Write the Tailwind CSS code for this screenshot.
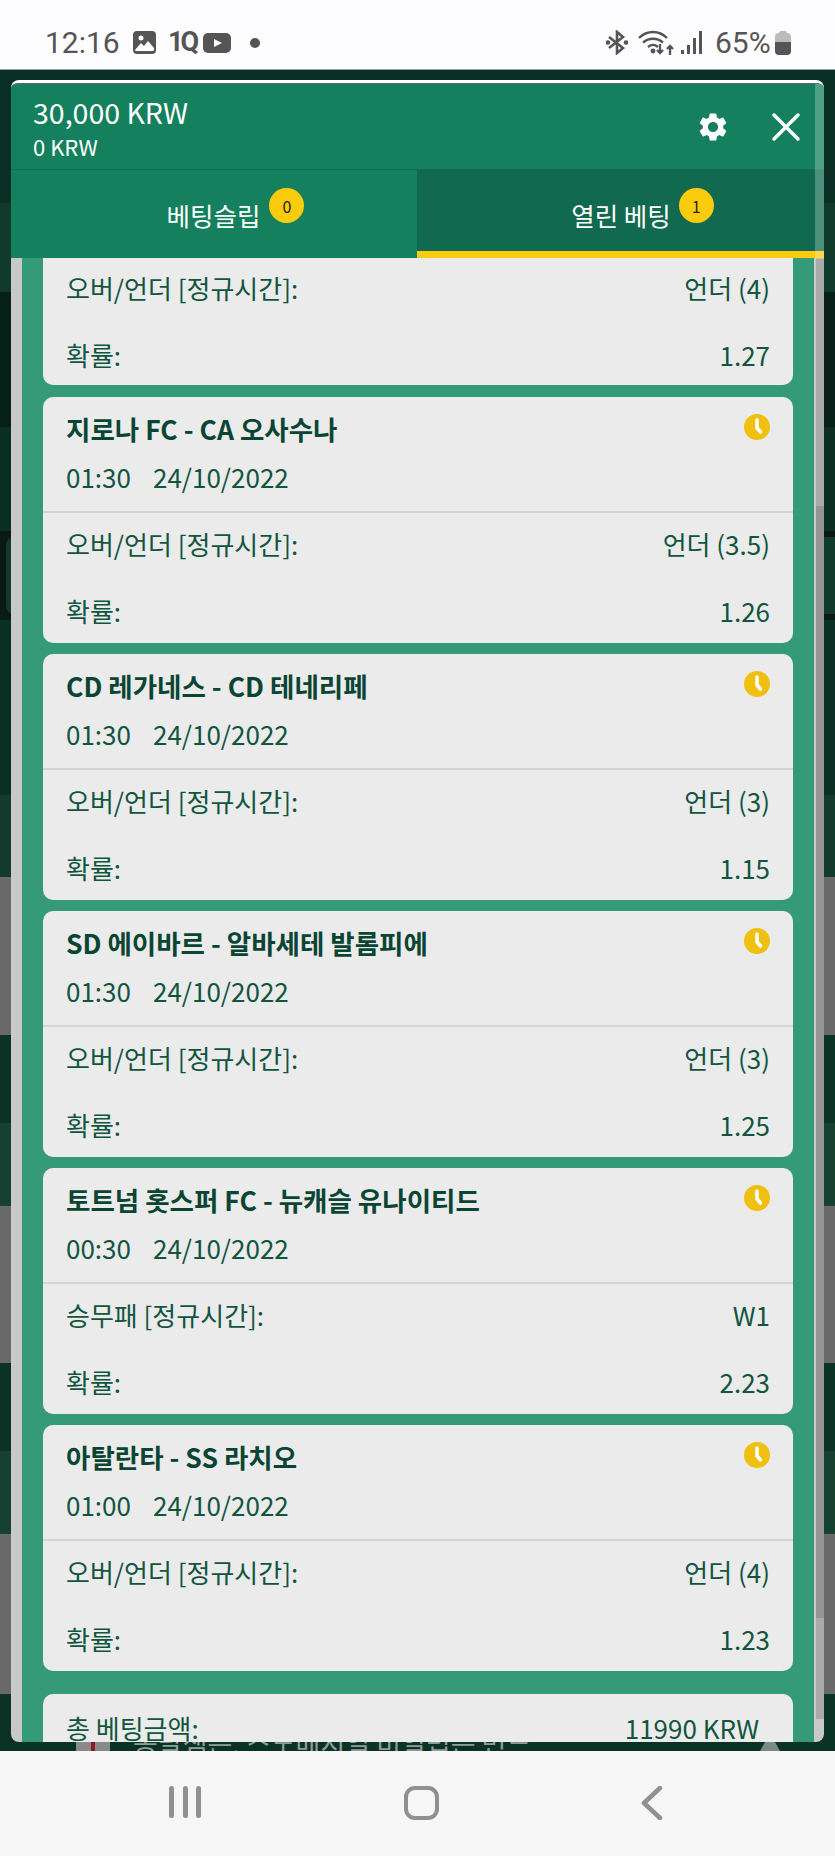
<!DOCTYPE html>
<html>
	<head>
		<title>베팅슬립</title>
		<meta charset="utf-8" />
		<meta name="viewport" content="width=device-width, initial-scale=1" />
		<script src="https://cdn.jsdelivr.net/npm/@tailwindcss/browser@4"></script>
	</head>
	<body class="bg-[#f6f6f6] font-['Noto_Sans_CJK_KR','Noto_Sans',sans-serif]">
		<div class="flex flex-col h-[1856px] w-[835px] overflow-hidden">

			<!-- status bar -->
			<div class="h-[70px] shrink-0 bg-[#fdfcfe] border-b border-[#9aa5a0] flex items-center justify-between pt-[16px] pl-[45px] pr-[44px] text-[#555] font-['Roboto',sans-serif]">
				<div class="flex items-center">
					<span class="text-[30px] leading-none w-[88px]">12:16</span>
					<svg class="w-[23px] h-[23px]" viewBox="0 0 23 23"><rect width="23" height="23" rx="4" fill="#555"/><path d="M2 19l6-7 3 3 4-5 6 7v2a1 1 0 0 1-1 1H3a1 1 0 0 1-1-1z" fill="#fff"/><circle cx="8" cy="7" r="2.5" fill="#fff"/></svg>
					<span class="w-[47px] pl-[12px] text-[27px] leading-none font-bold tracking-[-3px]">1Q</span>
					<svg class="w-[28px] h-[20px]" viewBox="0 0 28 20"><rect width="28" height="20" rx="5" fill="#555"/><path d="M11 6l8 4-8 4z" fill="#fff"/></svg>
					<span class="w-[10px] h-[10px] rounded-full bg-[#555] ml-[19px]"></span>
				</div>
				<div class="flex items-center">
					<svg class="w-[22px] h-[25px]" viewBox="0 0 22 25" fill="none" stroke="#555" stroke-width="2.6"><path d="M3 7l14 11-6 5V2l6 5L3 18"/><circle cx="2" cy="12.500" r="1" fill="#555"/><circle cx="20" cy="12.500" r="1" fill="#555"/></svg>
					<svg class="w-[36px] h-[25px] ml-[10px]" viewBox="0 0 36 25" fill="none" stroke="#555" stroke-width="2.300"><path d="M1 8c8-8 20-8 28 0"/><path d="M5 12.500c6-5 14-5 20 0"/><path d="M10 17c3-2.500 7-2.500 10 0"/><circle cx="15" cy="21" r="1.300" fill="#555"/><path d="M22 14v9m-3-3l3 3 3-3"/><path d="M32 25v-9m-3 3l3-3 3 3"/></svg>
					<svg class="w-[22px] h-[23px] ml-[7px]" viewBox="0 0 22 23" fill="#555"><rect x="0" y="19" width="3" height="4"/><rect x="6" y="14" width="3" height="9"/><rect x="12" y="7" width="3" height="16"/><rect x="18" y="0" width="3" height="23"/></svg>
					<span class="text-[30px] leading-none ml-[12px] w-[60px]">65%</span>
					<div class="w-[16px] h-[24px] flex flex-col items-center">
						<div class="w-[8px] h-[2px] bg-[#bbb] rounded-t-sm"></div>
						<div class="w-[16px] h-[9px] bg-[#bbb] rounded-t-sm"></div>
						<div class="w-[16px] h-[13px] bg-[#555] rounded-b-sm"></div>
					</div>
				</div>
			</div>

			<!-- page behind the panel -->
			<div class="relative h-[1681px] shrink-0 pt-[10px] px-[11px]">
				<div class="absolute inset-0 flex flex-col">
					<div class="h-[133px] bg-[#0a2f24]"></div>
					<div class="h-[89px] bg-[#0f3a2c]"></div>
					<div class="h-[135px] bg-[#07201a]"></div>
					<div class="h-[104px] bg-[#0a2e22]"></div>
					<div class="h-[89px] bg-[#0a1a14] py-[6px] pl-[6px]"><div class="h-full bg-[#103a2c] rounded-l-lg"></div></div>
					<div class="h-[175px] bg-[#0a2f24]"></div>
					<div class="h-[82px] bg-[#123b2e]"></div>
					<div class="h-[158px] bg-[#6a6a6a]"></div>
					<div class="h-[88px] bg-[#0a3325]"></div>
					<div class="h-[83px] bg-[#16402f]"></div>
					<div class="h-[157px] bg-[#6a6a6a]"></div>
					<div class="h-[88px] bg-[#0a3325]"></div>
					<div class="h-[83px] bg-[#16402f]"></div>
					<div class="h-[160px] bg-[#6a6a6a]"></div>
					<div class="h-[57px] bg-[#0a3325]"></div>
				</div>

				<!-- row peeking out under the panel -->
				<div class="absolute left-0 right-0 bottom-0 h-[9px] overflow-hidden flex items-start">
					<div class="ml-[76px] w-[34px] h-full bg-[#8a8a8a] flex justify-center"><div class="w-[4px] h-full bg-[#8c1a2a]"></div></div>
					<span class="ml-[23px] -mt-[7px] text-[27px] leading-[16px] whitespace-nowrap text-[#8f9f98]">옹달샘은, 스노메시얼 미일렵든 먼느</span>
					<svg class="absolute left-[760px] top-0 w-[20px] h-[9px]" viewBox="0 0 20 9"><path d="M5 0h10l5 9H0z" fill="#7c8a84"/></svg>
				</div>

				<!-- panel -->
				<div class="relative h-[1662px] rounded-lg overflow-hidden bg-[#c9c9c9] border-t-[3px] border-white flex flex-col">
					<div class="h-[1px] bg-[#666] shrink-0"></div>

					<div class="h-[86px] shrink-0 bg-[#15805d] border-b border-[#117050] flex items-center justify-between pl-[22px] pr-[23px] text-white">
						<div class="flex flex-col">
							<span class="text-[28.500px] leading-[36px]">30,000 KRW</span>
							<span class="text-[22px] leading-[28px] mt-[2px]">0 KRW</span>
						</div>
						<div class="flex items-center gap-[41px]">
							<svg class="w-[34px] h-[34px]" viewBox="0 0 24 24" fill="#fff"><path d="M19.14 12.94c.04-.3.06-.61.06-.94 0-.32-.02-.64-.07-.94l2.03-1.58c.18-.14.23-.41.12-.61l-1.92-3.32c-.12-.22-.37-.29-.59-.22l-2.39.96c-.5-.38-1.03-.7-1.62-.94l-.36-2.54c-.04-.24-.24-.41-.48-.41h-3.84c-.24 0-.43.17-.47.41l-.36 2.54c-.59.24-1.13.57-1.62.94l-2.39-.96c-.22-.08-.47 0-.59.22L2.74 8.87c-.12.21-.08.47.12.61l2.03 1.58c-.05.3-.09.63-.09.94s.02.64.07.94l-2.03 1.58c-.18.14-.23.41-.12.61l1.92 3.32c.12.22.37.29.59.22l2.39-.96c.5.38 1.03.7 1.62.94l.36 2.54c.05.24.24.41.48.41h3.84c.24 0 .44-.17.47-.41l.36-2.54c.59-.24 1.13-.56 1.62-.94l2.39.96c.22.08.47 0 .59-.22l1.92-3.32c.12-.22.07-.47-.12-.61l-2.01-1.58zM12 15.600c-1.98 0-3.600-1.620-3.600-3.600s1.620-3.600 3.600-3.600 3.600 1.620 3.600 3.600-1.620 3.600-3.600 3.600z"/></svg>
							<svg class="w-[30px] h-[30px]" viewBox="0 0 30 30" fill="none" stroke="#fff" stroke-width="3.500" stroke-linecap="round"><path d="M3 3l24 24M27 3L3 27"/></svg>
						</div>
					</div>

					<div class="h-[88px] shrink-0 flex text-white text-[25.500px]">
						<div class="w-[406px] bg-[#15805d] flex justify-center pt-[27px] pl-[43px]">
							<span class="leading-[36px]">베팅슬립</span>
							<span class="w-[35px] h-[35px] rounded-full bg-[#fbcb0e] text-[#222] text-[16px] flex items-center justify-center ml-[9px] -mt-[9px]">0</span>
						</div>
						<div class="flex-1 bg-[#116a4f] border-b-[7px] border-[#fbcb0e] flex justify-center pt-[27px] pl-[44px]">
							<span class="leading-[36px]">열린 베팅</span>
							<span class="w-[35px] h-[35px] rounded-full bg-[#fbcb0e] text-[#222] text-[16px] flex items-center justify-center ml-[8px] -mt-[9px]">1</span>
						</div>
					</div>

					<div class="flex-1 min-h-0 flex text-[#11553f] text-[26px]">
						<div class="w-[11px] shrink-0"></div>
						<div class="w-[792px] shrink-0 bg-[#359a78] px-[21px] overflow-hidden">

							<div class="h-[127px] bg-[#ebebeb] rounded-b-[10px] flex flex-col">
								<div class="h-[58px] shrink-0 flex items-center justify-between px-[23px]"><span>오버/언더 [정규시간]:</span><span>언더 (4)</span></div>
								<div class="h-[62px] mt-[7px] shrink-0 flex items-center justify-between px-[23px]"><span>확률:</span><span>1.27</span></div>
							</div>

							<div class="h-[246px] mt-[12px] bg-[#ebebeb] rounded-[10px] flex flex-col">
								<div class="h-[114px] shrink-0 border-b-2 border-[#d4d4d4] box-content -mb-[1px] px-[23px]">
									<div class="flex justify-between items-start pt-[16px]">
										<span class="font-bold text-[26.500px] leading-[32px] text-[#0a4534]">지로나 FC - CA 오사수나</span>
										<svg class="w-[26px] h-[26px] mt-[1px]" viewBox="0 0 26 26"><circle cx="13" cy="13" r="13" fill="#f0c010"/><path d="M13 6v8l3.500 4" fill="none" stroke="#fff" stroke-width="3.500" stroke-linecap="round"/></svg>
									</div>
									<div class="mt-[16px] leading-[32px] flex gap-[22px]"><span>01:30</span><span>24/10/2022</span></div>
								</div>
								<div class="flex-1 flex flex-col">
									<div class="h-[63px] shrink-0 flex items-center justify-between px-[23px]"><span>오버/언더 [정규시간]:</span><span>언더 (3.5)</span></div>
									<div class="h-[65px] mt-[3px] shrink-0 flex items-center justify-between px-[23px]"><span>확률:</span><span>1.26</span></div>
								</div>
							</div>

							<div class="h-[246px] mt-[11px] bg-[#ebebeb] rounded-[10px] flex flex-col">
								<div class="h-[114px] shrink-0 border-b-2 border-[#d4d4d4] box-content -mb-[1px] px-[23px]">
									<div class="flex justify-between items-start pt-[16px]">
										<span class="font-bold text-[26.500px] leading-[32px] text-[#0a4534]">CD 레가네스 - CD 테네리페</span>
										<svg class="w-[26px] h-[26px] mt-[1px]" viewBox="0 0 26 26"><circle cx="13" cy="13" r="13" fill="#f0c010"/><path d="M13 6v8l3.500 4" fill="none" stroke="#fff" stroke-width="3.500" stroke-linecap="round"/></svg>
									</div>
									<div class="mt-[16px] leading-[32px] flex gap-[22px]"><span>01:30</span><span>24/10/2022</span></div>
								</div>
								<div class="flex-1 flex flex-col">
									<div class="h-[63px] shrink-0 flex items-center justify-between px-[23px]"><span>오버/언더 [정규시간]:</span><span>언더 (3)</span></div>
									<div class="h-[65px] mt-[3px] shrink-0 flex items-center justify-between px-[23px]"><span>확률:</span><span>1.15</span></div>
								</div>
							</div>

							<div class="h-[246px] mt-[11px] bg-[#ebebeb] rounded-[10px] flex flex-col">
								<div class="h-[114px] shrink-0 border-b-2 border-[#d4d4d4] box-content -mb-[1px] px-[23px]">
									<div class="flex justify-between items-start pt-[16px]">
										<span class="font-bold text-[26.500px] leading-[32px] text-[#0a4534]">SD 에이바르 - 알바세테 발롬피에</span>
										<svg class="w-[26px] h-[26px] mt-[1px]" viewBox="0 0 26 26"><circle cx="13" cy="13" r="13" fill="#f0c010"/><path d="M13 6v8l3.500 4" fill="none" stroke="#fff" stroke-width="3.500" stroke-linecap="round"/></svg>
									</div>
									<div class="mt-[16px] leading-[32px] flex gap-[22px]"><span>01:30</span><span>24/10/2022</span></div>
								</div>
								<div class="flex-1 flex flex-col">
									<div class="h-[63px] shrink-0 flex items-center justify-between px-[23px]"><span>오버/언더 [정규시간]:</span><span>언더 (3)</span></div>
									<div class="h-[65px] mt-[3px] shrink-0 flex items-center justify-between px-[23px]"><span>확률:</span><span>1.25</span></div>
								</div>
							</div>

							<div class="h-[246px] mt-[11px] bg-[#ebebeb] rounded-[10px] flex flex-col">
								<div class="h-[114px] shrink-0 border-b-2 border-[#d4d4d4] box-content -mb-[1px] px-[23px]">
									<div class="flex justify-between items-start pt-[16px]">
										<span class="font-bold text-[26.500px] leading-[32px] text-[#0a4534]">토트넘 홋스퍼 FC - 뉴캐슬 유나이티드</span>
										<svg class="w-[26px] h-[26px] mt-[1px]" viewBox="0 0 26 26"><circle cx="13" cy="13" r="13" fill="#f0c010"/><path d="M13 6v8l3.500 4" fill="none" stroke="#fff" stroke-width="3.500" stroke-linecap="round"/></svg>
									</div>
									<div class="mt-[16px] leading-[32px] flex gap-[22px]"><span>00:30</span><span>24/10/2022</span></div>
								</div>
								<div class="flex-1 flex flex-col">
									<div class="h-[63px] shrink-0 flex items-center justify-between px-[23px]"><span>승무패 [정규시간]:</span><span>W1</span></div>
									<div class="h-[65px] mt-[3px] shrink-0 flex items-center justify-between px-[23px]"><span>확률:</span><span>2.23</span></div>
								</div>
							</div>

							<div class="h-[246px] mt-[11px] bg-[#ebebeb] rounded-[10px] flex flex-col">
								<div class="h-[114px] shrink-0 border-b-2 border-[#d4d4d4] box-content -mb-[1px] px-[23px]">
									<div class="flex justify-between items-start pt-[16px]">
										<span class="font-bold text-[26.500px] leading-[32px] text-[#0a4534]">아탈란타 - SS 라치오</span>
										<svg class="w-[26px] h-[26px] mt-[1px]" viewBox="0 0 26 26"><circle cx="13" cy="13" r="13" fill="#f0c010"/><path d="M13 6v8l3.500 4" fill="none" stroke="#fff" stroke-width="3.500" stroke-linecap="round"/></svg>
									</div>
									<div class="mt-[16px] leading-[32px] flex gap-[22px]"><span>01:00</span><span>24/10/2022</span></div>
								</div>
								<div class="flex-1 flex flex-col">
									<div class="h-[63px] shrink-0 flex items-center justify-between px-[23px]"><span>오버/언더 [정규시간]:</span><span>언더 (4)</span></div>
									<div class="h-[65px] mt-[3px] shrink-0 flex items-center justify-between px-[23px]"><span>확률:</span><span>1.23</span></div>
								</div>
							</div>

							<div class="h-[120px] mt-[23px] bg-[#ebebeb] rounded-t-[10px] flex justify-between pl-[23px] pr-[34px] pt-[16px]">
								<span class="leading-[36px]">총 베팅금액:</span><span class="leading-[36px]">11990 KRW</span>
							</div>
						</div>

						<!-- scrollbar -->
						<div class="flex-1 flex flex-col pl-[2px]">
							<div class="h-[248px] bg-[#aaaaaa]"></div>
							<div class="h-[1112px] bg-[#959595]"></div>
							<div class="h-[101px] bg-[#aaaaaa]"></div>
						</div>
					</div>

					<!-- scrollbar track over the header -->
					<div class="absolute top-[1px] right-0 w-[9px] h-[175px] bg-white/25"></div>
				</div>
			</div>

			<!-- nav bar -->
			<div class="flex-1 bg-[#f6f6f6] relative flex items-start justify-between pl-[169px] pr-[172px] pt-[35px]">
				<div class="flex gap-[8.500px]">
					<div class="w-[5px] h-[32px] rounded-full bg-[#909090]"></div>
					<div class="w-[5px] h-[32px] rounded-full bg-[#909090]"></div>
					<div class="w-[5px] h-[32px] rounded-full bg-[#909090]"></div>
				</div>
				<div class="w-[35px] h-[34px] rounded-[11px] border-[4.500px] border-[#909090]"></div>
				<svg class="w-[22px] h-[34px]" viewBox="0 0 22 34" fill="none" stroke="#909090" stroke-width="4.500" stroke-linecap="round" stroke-linejoin="round"><path d="M19 2L3 17l16 15"/></svg>
			</div>
		</div>
	</body>
</html>
